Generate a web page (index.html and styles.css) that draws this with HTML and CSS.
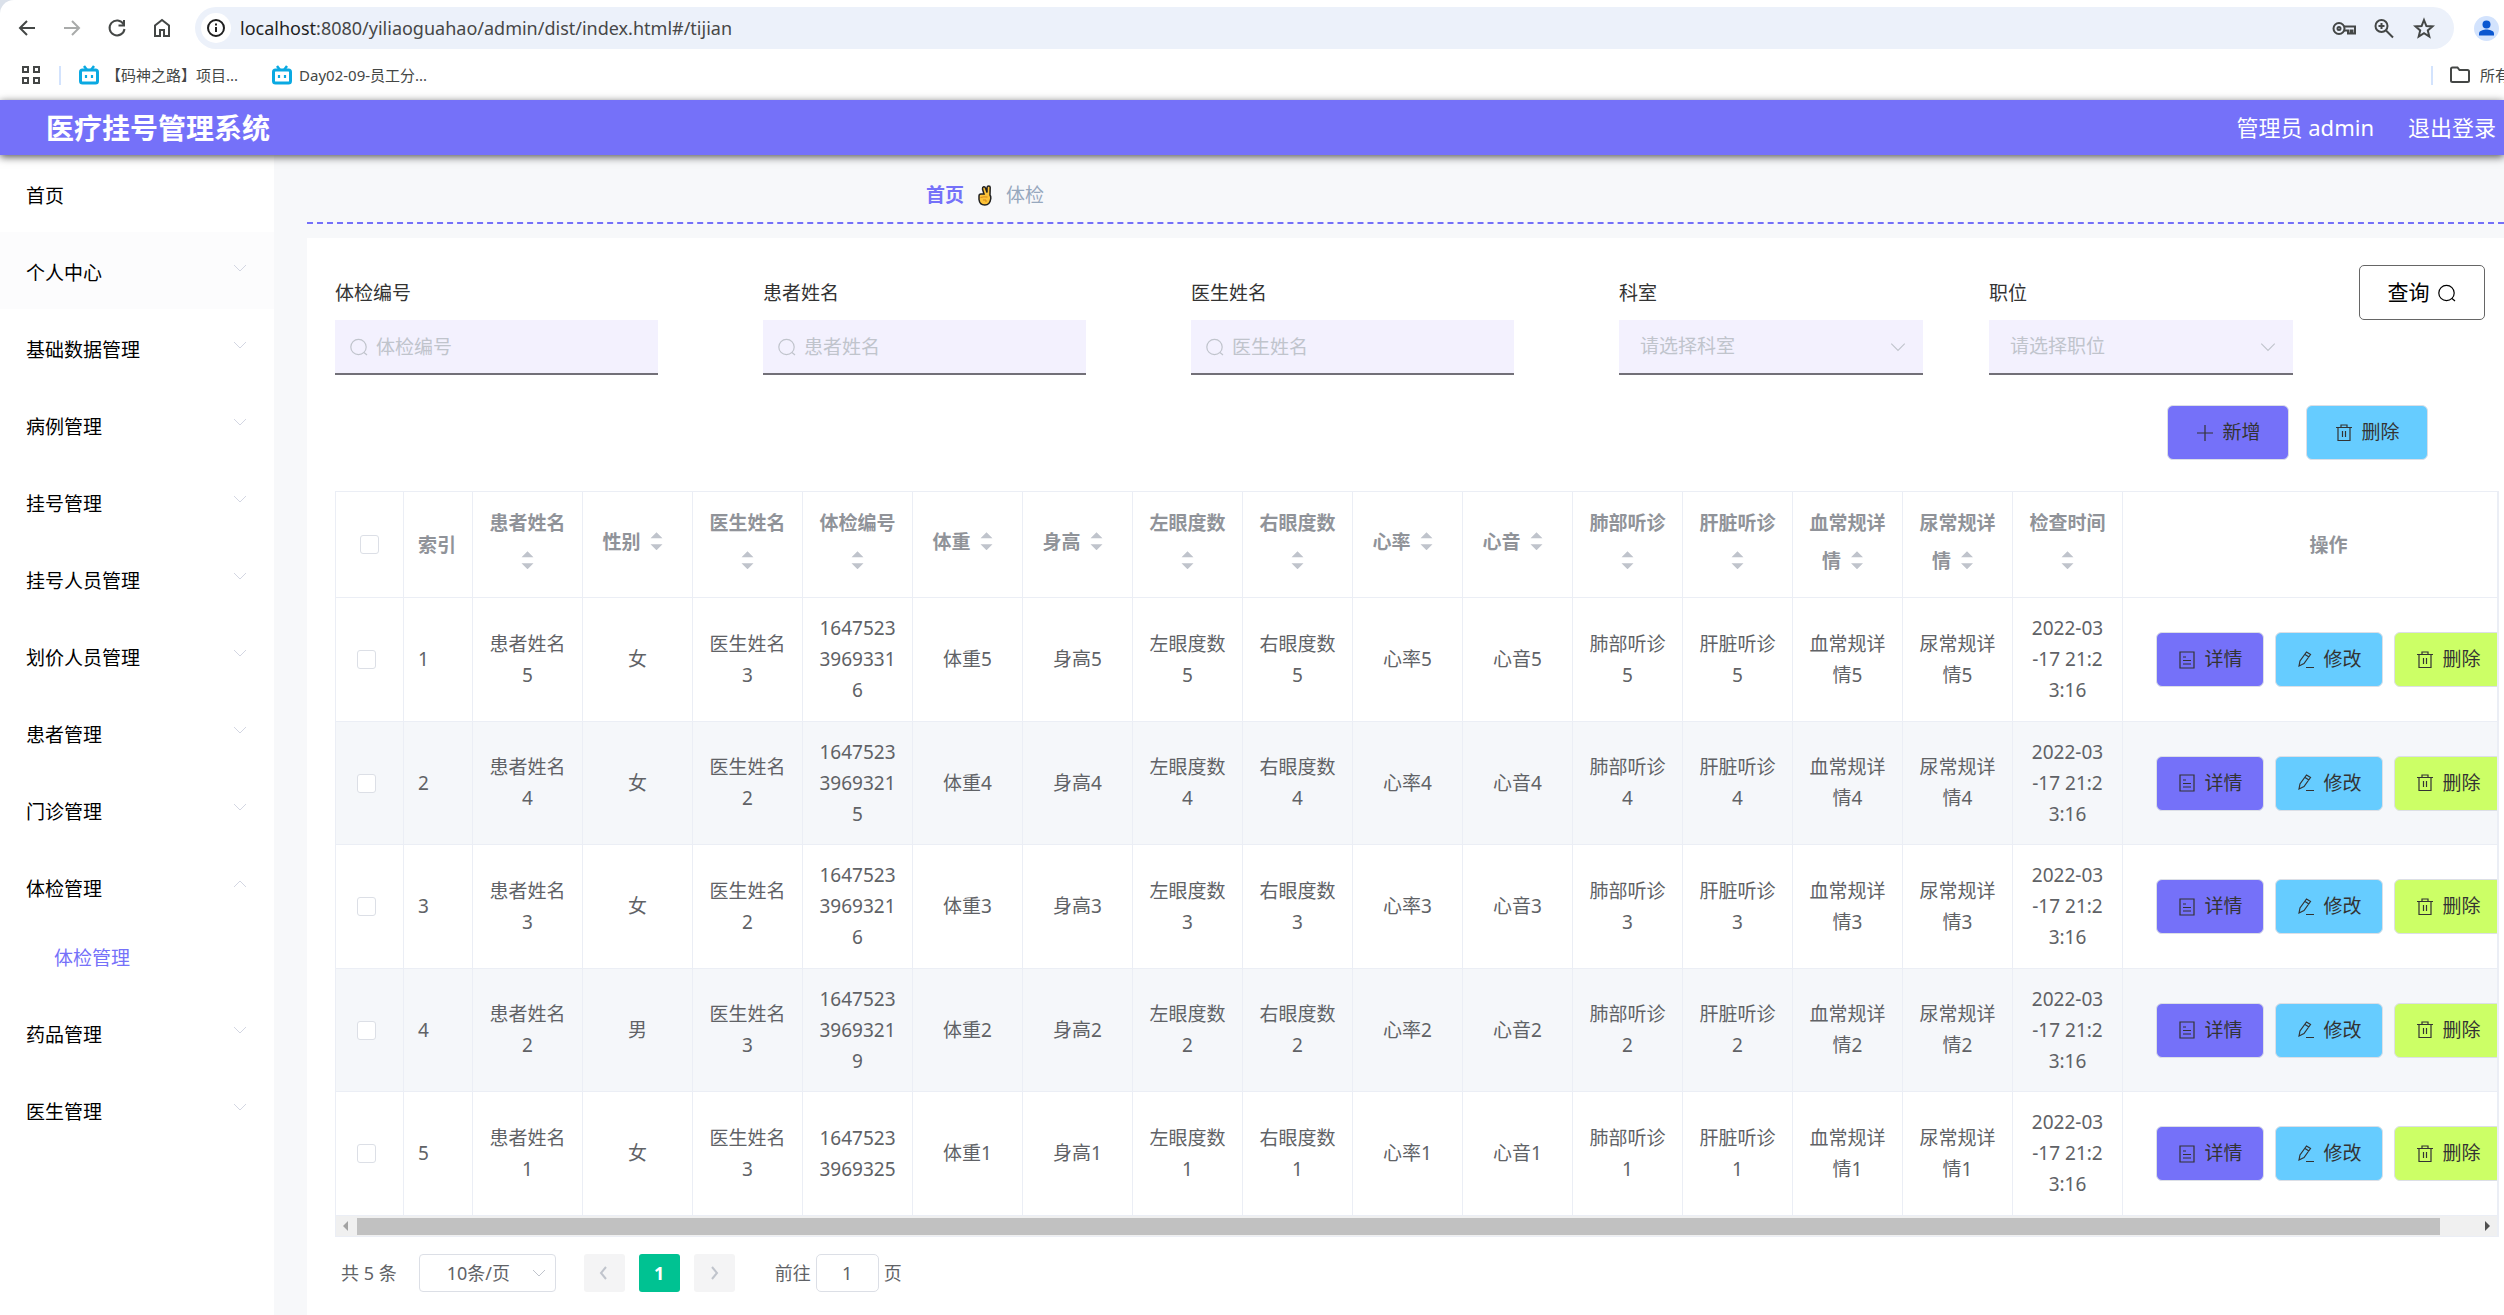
FILE: index.html
```html
<!DOCTYPE html>
<html lang="zh-CN">
<head>
<meta charset="utf-8">
<title>医疗挂号管理系统</title>
<link rel="stylesheet" href="styles.css">
</head>
<body>
<svg class="sprite" aria-hidden="true">
  <symbol id="i-down" viewBox="0 0 16 16"><path d="M2 5l6 6 6-6"/></symbol>
  <symbol id="i-up" viewBox="0 0 16 16"><path d="M2 11l6-6 6 6"/></symbol>
  <symbol id="i-left" viewBox="0 0 16 16"><path d="M10 2L5 8l5 6"/></symbol>
  <symbol id="i-right" viewBox="0 0 16 16"><path d="M6 2l5 6-5 6"/></symbol>
  <symbol id="i-search" viewBox="0 0 20 20"><circle cx="9.500" cy="10" r="7.700"/><path d="M15 15.500l3 2.500"/></symbol>
  <symbol id="i-plus" viewBox="0 0 20 20"><path d="M10 2v16M2 10h16"/></symbol>
  <symbol id="i-trash" viewBox="0 0 20 20"><path d="M2 4.500h16M4 4.500v13h12v-13M7 4.500V2h6v2.500M8.500 8v6M11.500 8v6"/></symbol>
  <symbol id="i-doc" viewBox="0 0 20 20"><path d="M3 2h14v16H3zM6 7h3M6 10.500h8M6 14h8"/></symbol>
  <symbol id="i-edit" viewBox="0 0 20 20"><path d="M3 16l1-5 6.500-9 4 2.500-6.500 9zM9 4.500l4 2.500M3 16l5-2.500M10 17.500h8"/></symbol>
  <symbol id="i-bili" viewBox="0 0 22 22"><path d="M6 2l3 4M16 2l-3 4" stroke-width="2.500"/><rect x="2.500" y="6" width="17" height="13" rx="2" stroke-width="3"/><path d="M8 11v3M14 11v3" stroke-width="2.200"/></symbol>
</svg>

<header class="browser">
  <div class="toolbar">
    <button class="tool" aria-label="后退"><svg class="ico" viewBox="0 0 24 24"><path d="M20 12H5M12 5l-7 7 7 7"/></svg></button>
    <button class="tool tool-off" aria-label="前进"><svg class="ico" viewBox="0 0 24 24"><path d="M4 12h15M12 5l7 7-7 7"/></svg></button>
    <button class="tool" aria-label="刷新"><svg class="ico" viewBox="0 0 24 24"><path d="M18.500 8A7.500 7.500 0 1 0 19.500 13M19 4v5.500h-5.500"/></svg></button>
    <button class="tool" aria-label="主页"><svg class="ico" viewBox="0 0 24 24"><path d="M5 20V9.500L12 4l7 5.500V20h-5v-6h-4v6z"/></svg></button>
    <div class="address">
      <span class="info"><svg class="ico" viewBox="0 0 24 24"><circle cx="12" cy="12" r="8"/><path d="M12 11v5M12 7.500v2"/></svg></span>
      <span class="url"><b>localhost</b>:8080/yiliaoguahao/admin/dist/index.html#/tijian</span>
      <button class="tool" aria-label="密码"><svg class="ico" viewBox="0 0 24 24"><circle cx="7" cy="12.500" r="5.500"/><circle cx="7" cy="12.500" r="1.500"/><path d="M12 10.500h11v7h-2.500v-3h-2v3H16v-3h-4"/></svg></button>
      <button class="tool" aria-label="缩放"><svg class="ico" viewBox="0 0 24 24"><circle cx="9.500" cy="10" r="6"/><path d="M14 14.500l7 7M9.500 7v6M6.500 10h6"/></svg></button>
      <button class="tool" aria-label="收藏"><svg class="ico" viewBox="0 0 24 24"><path d="M12 4l2.400 6 6.100.4-4.700 4 1.500 6.100L12 17.100l-5.300 3.400 1.500-6.100-4.700-4 6.100-.4z"/></svg></button>
    </div>
    <svg class="avatar" viewBox="0 0 25 25"><circle cx="12.500" cy="12.500" r="12.500" fill="#d3e3fd"/><circle cx="12.500" cy="8.500" r="4" fill="#0b57d0"/><path d="M5 19.500v-2c0-3 5-4 7.500-4s7.500 1 7.500 4v2z" fill="#0b57d0"/></svg>
  </div>
  <nav class="bookmarks">
    <svg class="apps" viewBox="0 0 20 20"><path d="M2 2h5v5H2zM13 2h5v5h-5zM2 13h5v5H2zM13 13h5v5h-5z"/></svg>
    <span class="divider"></span>
    <a href="#" class="mark"><svg class="bili"><use href="#i-bili"/></svg>【码神之路】项目...</a>
    <a href="#" class="mark"><svg class="bili"><use href="#i-bili"/></svg>Day02-09-员工分...</a>
    <span class="fill"></span>
    <span class="divider"></span>
    <a href="#" class="mark all"><svg class="folder" viewBox="0 0 20 18"><path d="M1 3q0-1.500 1.500-1.500H7.500l2 2.500h8q1.500 0 1.500 1.500v9q0 1.500-1.500 1.500h-15q-1.500 0-1.500-1.500z"/></svg><span>所有书签</span></a>
  </nav>
</header>

<div class="topbar">
  <h1>医疗挂号管理系统</h1>
  <span class="user">管理员 admin</span>
  <a href="#" class="logout">退出登录</a>
</div>

<div class="shell">
  <nav class="side">
    <a href="#" class="item">首页</a>
    <a href="#" class="item item-hover">个人中心<svg class="chev"><use href="#i-down"/></svg></a>
    <a href="#" class="item">基础数据管理<svg class="chev"><use href="#i-down"/></svg></a>
    <a href="#" class="item">病例管理<svg class="chev"><use href="#i-down"/></svg></a>
    <a href="#" class="item">挂号管理<svg class="chev"><use href="#i-down"/></svg></a>
    <a href="#" class="item">挂号人员管理<svg class="chev"><use href="#i-down"/></svg></a>
    <a href="#" class="item">划价人员管理<svg class="chev"><use href="#i-down"/></svg></a>
    <a href="#" class="item">患者管理<svg class="chev"><use href="#i-down"/></svg></a>
    <a href="#" class="item">门诊管理<svg class="chev"><use href="#i-down"/></svg></a>
    <a href="#" class="item">体检管理<svg class="chev"><use href="#i-up"/></svg></a>
    <a href="#" class="sub">体检管理</a>
    <a href="#" class="item">药品管理<svg class="chev"><use href="#i-down"/></svg></a>
    <a href="#" class="item">医生管理<svg class="chev"><use href="#i-down"/></svg></a>
  </nav>

  <main class="main">
    <div class="crumbs">
      <a href="#">首页</a>
      <svg class="hand" viewBox="0 0 14 21"><path d="M6 9L4.500 4Q4.300 2 5.700 1.800T7.500 3L9 7.500V2.500Q9.200 1 10.700 1T12.200 2.500L12 10q1 1.500 .8 3.500-.8 6.500-6 6.500T1 14.500V11q0-2 2-2z" fill="#fdc338" stroke="#222" stroke-width="1.500"/><path d="M2.500 12.500q3-1 7-.5M5 15h3v2" fill="none" stroke="#d78a1c"/></svg>
      <span>体检</span>
    </div>

    <section class="card">
      <form class="filters">
        <div class="field"><label for="f1">体检编号</label><div class="box"><svg class="ei"><use href="#i-search"/></svg><input id="f1" type="text" placeholder="体检编号"></div></div>
        <div class="field"><label for="f2">患者姓名</label><div class="box"><svg class="ei"><use href="#i-search"/></svg><input id="f2" type="text" placeholder="患者姓名"></div></div>
        <div class="field"><label for="f3">医生姓名</label><div class="box"><svg class="ei"><use href="#i-search"/></svg><input id="f3" type="text" placeholder="医生姓名"></div></div>
        <div class="field narrow"><label for="f4">科室</label><div class="box pick"><select id="f4"><option>请选择科室</option></select><svg class="arrow"><use href="#i-down"/></svg></div></div>
        <div class="field narrow"><label for="f5">职位</label><div class="box pick"><select id="f5"><option>请选择职位</option></select><svg class="arrow"><use href="#i-down"/></svg></div></div>
        <button type="button" class="query">查询<svg class="ei"><use href="#i-search"/></svg></button>
      </form>

      <div class="actions">
        <button class="btn wide violet"><svg class="ei"><use href="#i-plus"/></svg>新增</button>
        <button class="btn wide sky"><svg class="ei"><use href="#i-trash"/></svg>删除</button>
      </div>

      <div class="grid">
        <div class="view">
        <table>
          <colgroup><col class="c-check"><col class="c-index"><col span="15" class="c-data"><col class="c-ops"></colgroup>
          <thead>
            <tr>
              <th><input type="checkbox" aria-label="全选"></th>
              <th class="idx">索引</th>
              <th class="sort">患者姓名<i class="caret"></i></th>
              <th class="sort">性别<i class="caret"></i></th>
              <th class="sort">医生姓名<i class="caret"></i></th>
              <th class="sort">体检编号<i class="caret"></i></th>
              <th class="sort">体重<i class="caret"></i></th>
              <th class="sort">身高<i class="caret"></i></th>
              <th class="sort">左眼度数<i class="caret"></i></th>
              <th class="sort">右眼度数<i class="caret"></i></th>
              <th class="sort">心率<i class="caret"></i></th>
              <th class="sort">心音<i class="caret"></i></th>
              <th class="sort">肺部听诊<i class="caret"></i></th>
              <th class="sort">肝脏听诊<i class="caret"></i></th>
              <th class="sort">血常规详情<i class="caret"></i></th>
              <th class="sort">尿常规详情<i class="caret"></i></th>
              <th class="sort">检查时间<i class="caret"></i></th>
              <th>操作</th>
            </tr>
          </thead>
          <tbody>
            <tr><td class="chk"><input type="checkbox" aria-label="选择第1行"></td><td class="idx">1</td><td>患者姓名5</td><td>女</td><td>医生姓名3</td><td>164752339693316</td><td>体重5</td><td>身高5</td><td>左眼度数5</td><td>右眼度数5</td><td>心率5</td><td>心音5</td><td>肺部听诊5</td><td>肝脏听诊5</td><td>血常规详情5</td><td>尿常规详情5</td><td>2022-03-17 21:23:16</td>
              <td><div class="ops"><button class="btn violet"><svg class="ei"><use href="#i-doc"/></svg>详情</button><button class="btn sky"><svg class="ei"><use href="#i-edit"/></svg>修改</button><button class="btn lime"><svg class="ei"><use href="#i-trash"/></svg>删除</button></div></td></tr>
            <tr><td class="chk"><input type="checkbox" aria-label="选择第2行"></td><td class="idx">2</td><td>患者姓名4</td><td>女</td><td>医生姓名2</td><td>164752339693215</td><td>体重4</td><td>身高4</td><td>左眼度数4</td><td>右眼度数4</td><td>心率4</td><td>心音4</td><td>肺部听诊4</td><td>肝脏听诊4</td><td>血常规详情4</td><td>尿常规详情4</td><td>2022-03-17 21:23:16</td>
              <td><div class="ops"><button class="btn violet"><svg class="ei"><use href="#i-doc"/></svg>详情</button><button class="btn sky"><svg class="ei"><use href="#i-edit"/></svg>修改</button><button class="btn lime"><svg class="ei"><use href="#i-trash"/></svg>删除</button></div></td></tr>
            <tr><td class="chk"><input type="checkbox" aria-label="选择第3行"></td><td class="idx">3</td><td>患者姓名3</td><td>女</td><td>医生姓名2</td><td>164752339693216</td><td>体重3</td><td>身高3</td><td>左眼度数3</td><td>右眼度数3</td><td>心率3</td><td>心音3</td><td>肺部听诊3</td><td>肝脏听诊3</td><td>血常规详情3</td><td>尿常规详情3</td><td>2022-03-17 21:23:16</td>
              <td><div class="ops"><button class="btn violet"><svg class="ei"><use href="#i-doc"/></svg>详情</button><button class="btn sky"><svg class="ei"><use href="#i-edit"/></svg>修改</button><button class="btn lime"><svg class="ei"><use href="#i-trash"/></svg>删除</button></div></td></tr>
            <tr><td class="chk"><input type="checkbox" aria-label="选择第4行"></td><td class="idx">4</td><td>患者姓名2</td><td>男</td><td>医生姓名3</td><td>164752339693219</td><td>体重2</td><td>身高2</td><td>左眼度数2</td><td>右眼度数2</td><td>心率2</td><td>心音2</td><td>肺部听诊2</td><td>肝脏听诊2</td><td>血常规详情2</td><td>尿常规详情2</td><td>2022-03-17 21:23:16</td>
              <td><div class="ops"><button class="btn violet"><svg class="ei"><use href="#i-doc"/></svg>详情</button><button class="btn sky"><svg class="ei"><use href="#i-edit"/></svg>修改</button><button class="btn lime"><svg class="ei"><use href="#i-trash"/></svg>删除</button></div></td></tr>
            <tr><td class="chk"><input type="checkbox" aria-label="选择第5行"></td><td class="idx">5</td><td>患者姓名1</td><td>女</td><td>医生姓名3</td><td>16475233969325</td><td>体重1</td><td>身高1</td><td>左眼度数1</td><td>右眼度数1</td><td>心率1</td><td>心音1</td><td>肺部听诊1</td><td>肝脏听诊1</td><td>血常规详情1</td><td>尿常规详情1</td><td>2022-03-17 21:23:16</td>
              <td><div class="ops"><button class="btn violet"><svg class="ei"><use href="#i-doc"/></svg>详情</button><button class="btn sky"><svg class="ei"><use href="#i-edit"/></svg>修改</button><button class="btn lime"><svg class="ei"><use href="#i-trash"/></svg>删除</button></div></td></tr>
          </tbody>
        </table>
        </div>
        <div class="scroll"><svg class="tip tip-off" viewBox="0 0 10 10"><path d="M7 0v10L2 5z"/></svg><span class="track"><span class="thumb"></span></span><svg class="tip" viewBox="0 0 10 10"><path d="M3 0v10l5-5z"/></svg></div>
      </div>

      <div class="pager">
        <span>共 5 条</span>
        <div class="size"><select aria-label="每页条数"><option>10条/页</option></select><svg class="arrow"><use href="#i-down"/></svg></div>
        <div class="pages">
          <button class="page" aria-label="上一页"><svg class="arrow"><use href="#i-left"/></svg></button>
          <button class="page on">1</button>
          <button class="page" aria-label="下一页"><svg class="arrow"><use href="#i-right"/></svg></button>
        </div>
        <label class="jump">前往<input type="text" value="1">页</label>
      </div>
    </section>
  </main>
</div>
</body>
</html>
```

FILE: styles.css
```css
* { box-sizing: border-box; }

body {
  margin: 0;
  min-height: 100vh;
  display: flex;
  flex-direction: column;
  overflow: hidden;
  background: #fff;
  color: #333;
  font: 19px/31px "Noto Sans", "Noto Sans CJK SC", sans-serif;
}

a { color: inherit; text-decoration: none; }
button, input, select { font: inherit; color: inherit; margin: 0; }
button { cursor: pointer; }
svg { fill: none; stroke: currentColor; flex: none; }
.sprite { position: absolute; width: 0; height: 0; }

/* browser chrome */
.browser { background: #dbe1ea; color: #444746; }
.toolbar {
  display: flex;
  align-items: center;
  height: 56px;
  padding: 0 5px 0 15px;
  background: #fff;
  border-top-left-radius: 14px;
}
.tool {
  display: flex;
  padding: 0;
  margin-right: 21px;
  border: 0;
  background: none;
}
.tool-off { color: #a9abaa; }
.ico { width: 24px; height: 24px; stroke-width: 2; }
.address {
  flex: 1;
  display: flex;
  align-items: center;
  height: 42px;
  padding: 0 2px 0 6px;
  margin-right: 20px;
  border-radius: 21px;
  background: #ecf1fa;
}
.address .tool { margin-right: 16px; }
.info {
  display: flex;
  align-items: center;
  justify-content: center;
  width: 30px;
  height: 30px;
  margin-right: 9px;
  border-radius: 50%;
  background: #fff;
  color: #1f1f1f;
}
.url { flex: 1; font-size: 18px; color: #474747; }
.url b { font-weight: 400; color: #1f1f1f; }
.avatar { width: 25px; height: 25px; stroke: none; }

.bookmarks {
  display: flex;
  align-items: center;
  height: 44px;
  padding: 0 0 6px 21px;
  background: #fff;
  font-size: 15px;
  line-height: 24px;
  overflow: hidden;
  white-space: nowrap;
}
.apps { width: 20px; height: 20px; stroke-width: 2; }
.divider { width: 2px; height: 19px; margin: 0 17px 0 18px; background: #d3e3fd; }
.mark { display: flex; align-items: center; gap: 6px; margin-right: 33px; }
.bili { width: 22px; height: 22px; color: #0aa9e2; }
.fill { flex: 1; }
.all { width: 54px; margin: 0; gap: 10px; }
.folder { width: 20px; height: 18px; stroke-width: 2; }

/* application header */
.topbar {
  position: relative;
  display: flex;
  align-items: center;
  height: 55px;
  padding: 0 8px 0 46px;
  background: #7571f9;
  box-shadow: 0 2px 8px #555;
  color: #fff;
  font-size: 22px;
}
.topbar h1 { flex: 1; margin: 0; font-size: 28px; line-height: 40px; font-weight: 700; }
.logout { margin-left: 34px; }

/* layout */
.shell { flex: 1; display: flex; }
.side { width: 274px; flex: none; background: #fff; color: #000; }
.item {
  display: flex;
  align-items: center;
  justify-content: space-between;
  height: 77px;
  padding: 5px 26px 0;
}
.item-hover { background: #fcfcfd; }
.chev { width: 16px; height: 16px; margin-bottom: 10px; color: #d3d6e2; }
.sub { display: block; height: 69px; padding: 18px 54px; color: #7571f9; }

.main {
  flex: 1;
  min-width: 0;
  display: flex;
  flex-direction: column;
  padding-left: 33px;
  background: #f7f8fa;
}
.crumbs {
  display: flex;
  align-items: center;
  gap: 14px;
  height: 69px;
  padding: 13px 0 0 619px;
  margin-bottom: 14px;
  border-bottom: 2px dashed #7571f9;
  color: #97a8be;
}
.crumbs a { color: #7571f9; font-weight: 700; }
.hand { width: 14px; height: 21px; }

.card { flex: 1; min-width: 0; padding: 27px 5px 24px 28px; background: #fff; }

/* filter form */
.filters {
  display: grid;
  grid-template-columns: repeat(3, minmax(0, 428fr)) repeat(2, minmax(0, 370fr)) 126px;
  align-items: start;
  margin-right: 14px;
}
.field { padding-right: 105px; }
.field.narrow { padding-right: 66px; }
.field label { display: block; padding: 13px 0 11px; }
.box {
  display: flex;
  align-items: center;
  gap: 7px;
  height: 55px;
  padding: 0 14px;
  border-bottom: 2px solid #727078;
  background: #f3f1fe;
  color: #c0c4cc;
}
.box input, .box select {
  flex: 1;
  min-width: 0;
  height: 50px;
  padding: 0;
  border: 0;
  outline: 0;
  background: none;
  appearance: none;
}
.box input::placeholder { color: #c0c4cc; opacity: 1; }
.pick { padding: 0 16px 0 21px; }
.arrow { width: 18px; height: 18px; color: #c0c4cc; }
.ei { width: 20px; height: 20px; stroke-width: 1.2; }
.query {
  display: flex;
  align-items: center;
  justify-content: center;
  gap: 7px;
  height: 55px;
  padding: 0;
  border: 1px solid #666;
  border-radius: 5px;
  background: #fff;
  color: #000;
  font-size: 21px;
}

/* buttons */
.actions { display: flex; justify-content: flex-end; gap: 17px; margin: 30px 71px 31px 0; }
.btn {
  display: flex;
  align-items: center;
  justify-content: center;
  gap: 7px;
  width: 108px;
  height: 55px;
  padding: 0;
  border: 1px solid #dcdfe6;
  border-radius: 6px;
  color: #333;
}
.wide { width: 122px; }
.violet { background: #7571f9; }
.sky { background: #66ccff; }
.lime { background: #ccff66; }

/* data table */
.grid { border: 1px solid #ebeef5; border-right-width: 2px; }
.view { overflow: hidden; }
table { width: 2199px; table-layout: fixed; border-collapse: separate; border-spacing: 0; color: #606266; }
.c-check { width: 68px; }
.c-index { width: 69px; }
.c-data { width: 110px; }
.c-ops { width: 412px; }
th, td {
  height: 123px;
  padding: 0 16px;
  border: solid #ebeef5;
  border-width: 0 1px 1px 0;
  text-align: center;
  vertical-align: middle;
  word-break: break-all;
}
th { height: 106px; line-height: 38px; color: #909399; font-weight: 700; }
th.sort { padding-bottom: 6px; }
tbody tr:nth-child(odd) td { height: 124px; }
tbody tr:nth-child(even) td { background: #f5f7fa; }
.idx { padding: 0 14px; text-align: left; }
.chk { padding: 0 23px 0 16px; }
.caret {
  display: inline-block;
  width: 32px;
  height: 18px;
  margin-bottom: 4px;
  vertical-align: middle;
  background: #c0c4cc;
  clip-path: polygon(16px 0, 22px 6px, 10px 6px, 10px 12px, 22px 12px, 16px 18px, 10px 12px, 10px 6px);
}
th input, td input {
  display: block;
  width: 19px;
  height: 19px;
  margin: 0 auto;
  border: 1px solid #dcdfe6;
  border-radius: 3px;
  background: #fff;
  appearance: none;
}
.ops { display: flex; gap: 11px; margin-left: 17px; }
.ops .btn { flex: none; }

.scroll { display: flex; align-items: center; height: 20px; padding: 0 5px; background: #f0f0f0; }
.tip { width: 10px; height: 10px; fill: #505050; stroke: none; }
.tip-off { fill: #a3a3a3; }
.track { flex: 1; margin: 0 6px; }
.thumb { display: block; width: calc(100% - 36px); height: 17px; background: #c1c1c1; }

/* pagination */
.pager { display: flex; align-items: center; margin: 17px 0 0 6px; font-size: 18px; color: #606266; }
.size {
  display: flex;
  align-items: center;
  width: 137px;
  height: 38px;
  margin: 0 28px 0 22px;
  padding: 0 8px 0 27px;
  border: 1px solid #dcdfe6;
  border-radius: 4px;
}
.size select { flex: 1; min-width: 0; padding: 0; border: 0; background: none; appearance: none; }
.size .arrow, .page .arrow { width: 16px; height: 16px; }
.pages { display: flex; gap: 14px; margin-right: 40px; }
.page {
  display: flex;
  align-items: center;
  justify-content: center;
  width: 41px;
  height: 38px;
  padding: 0;
  border: 0;
  border-radius: 3px;
  background: #f4f4f5;
}
.page .arrow { stroke-width: 2; }
.page.on { background: #00c292; color: #fff; font-weight: 700; }
.jump { display: flex; align-items: center; gap: 5px; }
.jump input {
  width: 63px;
  height: 38px;
  border: 1px solid #dcdfe6;
  border-radius: 5px;
  background: #fff;
  text-align: center;
}
```
